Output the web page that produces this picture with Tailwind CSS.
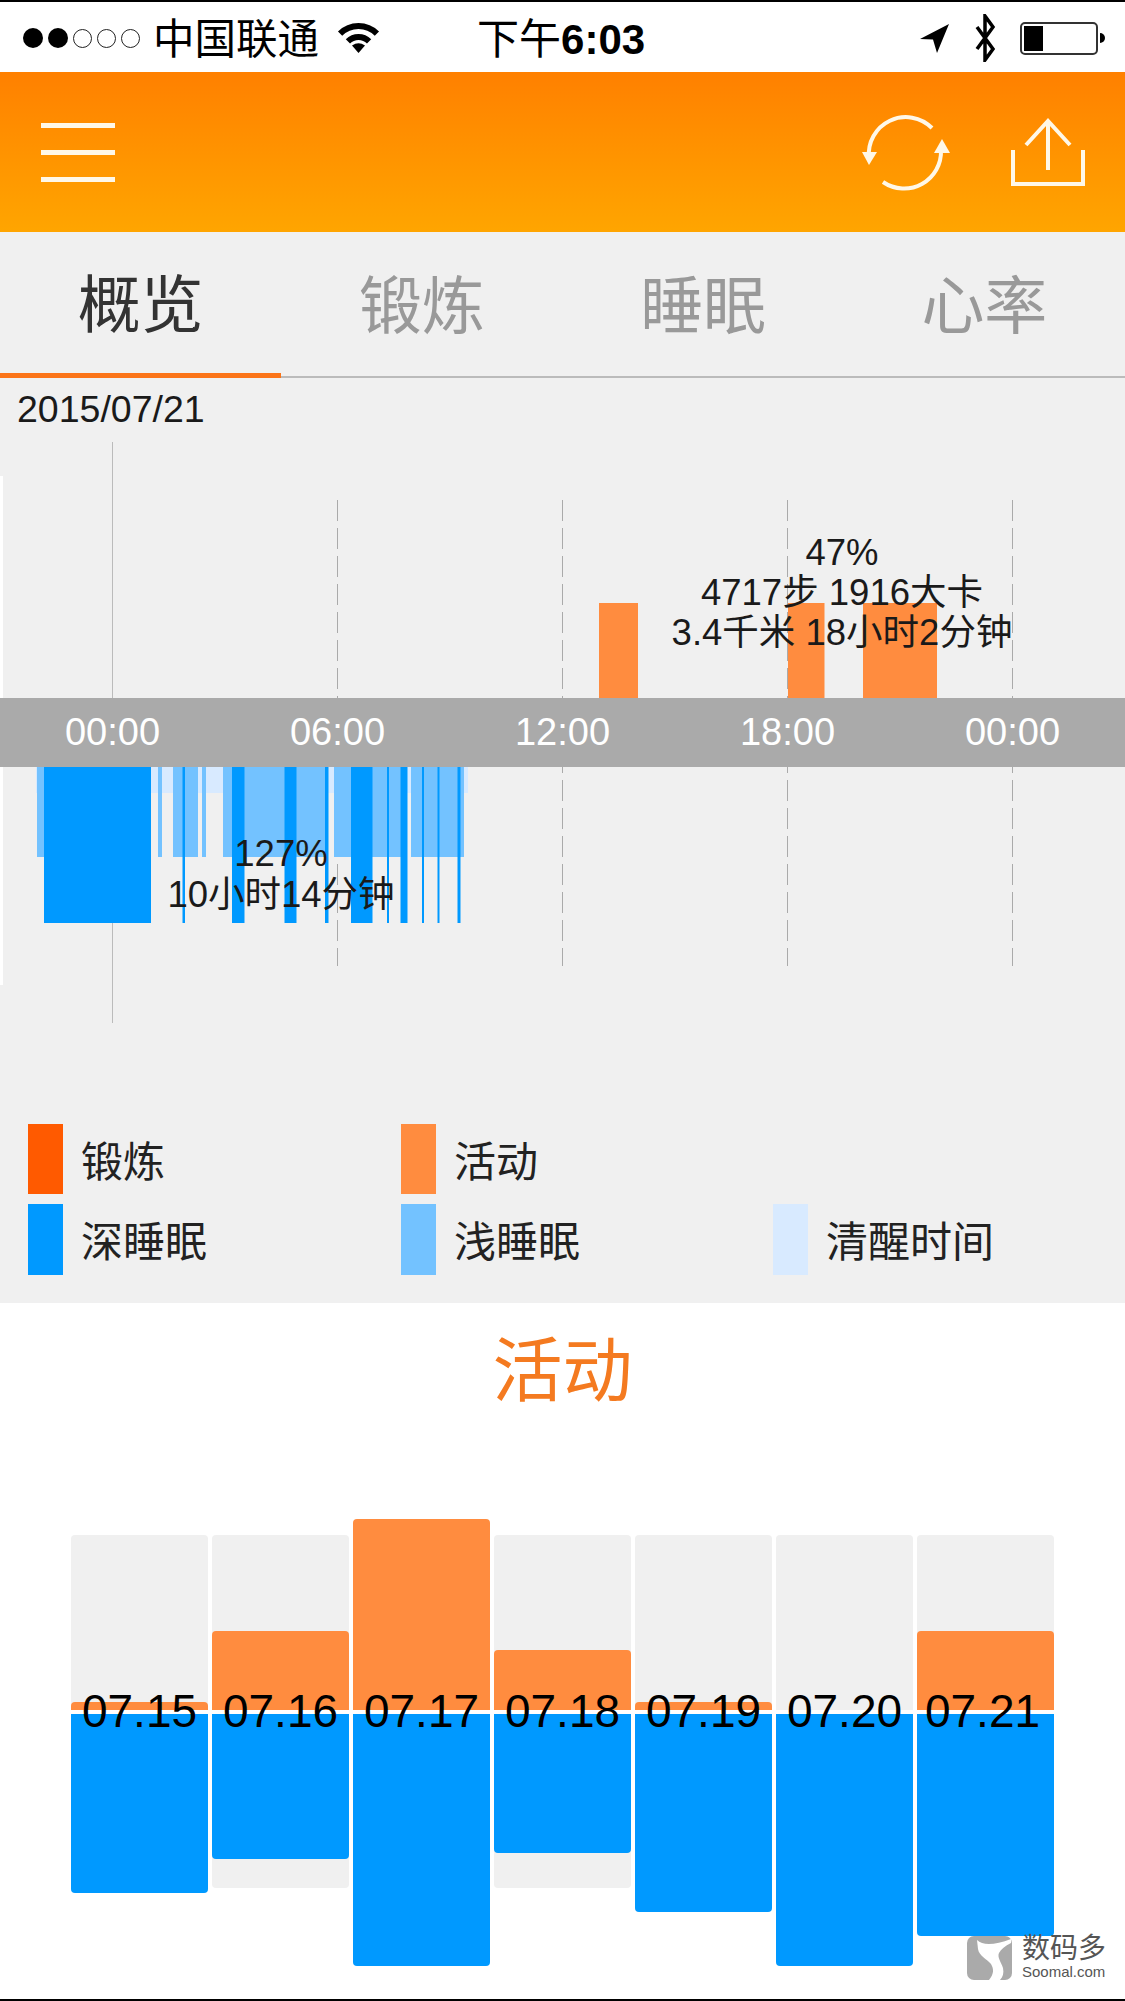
<!DOCTYPE html>
<html lang="zh-CN">
<head>
  <meta charset="UTF-8">
  <title>概览</title>
  <meta name="viewport" content="width=device-width,initial-scale=1">
  <script src="https://cdn.jsdelivr.net/npm/@tailwindcss/browser@4"></script>
</head>
<body class="relative w-[1125px] h-[2001px] overflow-hidden bg-white text-[#1a1a1a] font-['Liberation_Sans','Noto_Sans_CJK_SC',sans-serif]">
  <div class="h-[2px] bg-black"></div>

  <!-- Status bar -->
  <div class="h-[70px] flex items-center pl-[23px] pr-[20px] pt-[2px] text-black">
    <div class="flex items-center gap-[5px]">
      <span class="w-[20px] h-[20px] rounded-full bg-black"></span>
      <span class="w-[20px] h-[20px] rounded-full bg-black"></span>
      <span class="w-[19px] h-[19px] rounded-full border border-[#222]"></span>
      <span class="w-[19px] h-[19px] rounded-full border border-[#222]"></span>
      <span class="w-[19px] h-[19px] rounded-full border border-[#222]"></span>
    </div>
    <span class="ml-[13px] mt-[3px] text-[41.5px] leading-none whitespace-nowrap">中国联通</span>
    <svg class="ml-[18px] -mt-[2px]" width="43" height="32" viewBox="0 0 43 32">
      <path d="M3.1 12.6A26 26 0 0 1 39.9 12.6M10.9 20.4A15 15 0 0 1 32.1 20.4" fill="none" stroke="#000" stroke-width="6"/>
      <path d="M21.5 32L15 24.5Q21.5 20 28 24.5Z" fill="#000"/>
    </svg>
    <span class="ml-[97px] mt-[3px] text-[42px] leading-none whitespace-nowrap">下午<span class="font-bold">6:03</span></span>
    <svg class="ml-auto" width="32" height="31" viewBox="0 0 32 31"><path d="M30 1L1 16L14 16.5L18 30Z" fill="#000"/></svg>
    <svg class="ml-[21px]" width="26" height="48" viewBox="0 0 26 48"><path d="M5 13L21 35L13 46L13 2L21 13L5 35" fill="none" stroke="#000" stroke-width="3.5"/></svg>
    <div class="ml-[22px] flex items-center">
      <div class="w-[78px] h-[33px] rounded-[5px] border-2 border-[#333] p-[2px]">
        <div class="w-[19px] h-full bg-black"></div>
      </div>
      <div class="ml-[2px] w-[5px] h-[10px] rounded-r-full bg-black"></div>
    </div>
  </div>

  <!-- App header -->
  <header class="h-[160px] flex items-center pl-[41px] pr-[38px] bg-linear-to-b from-[#ff8000] to-[#ffa500]">
    <div class="w-[74px] flex flex-col gap-[22px]">
      <span class="h-[5px] bg-[#fff8e8]"></span>
      <span class="h-[5px] bg-[#fff8e8]"></span>
      <span class="h-[5px] bg-[#fff8e8]"></span>
    </div>
    <svg class="ml-auto" width="94" height="80" viewBox="858 112 94 80" fill="none" stroke="#fff8e8" stroke-width="4">
      <path d="M869 158A37 37 0 0 1 932 128"/>
      <path d="M883 182A37 37 0 0 0 941 150"/>
      <path d="M869 165L862 152L877 152Z" fill="#fff8e8" stroke="none"/>
      <path d="M942 139L934 153L950 153Z" fill="#fff8e8" stroke="none"/>
    </svg>
    <svg class="ml-[57px]" width="78" height="72" viewBox="1009 116 78 72" fill="none" stroke="#fff8e8" stroke-width="4">
      <path d="M1013 150V184H1083V150"/>
      <path d="M1048 170V122M1026 145L1048 121L1070 145"/>
    </svg>
  </header>

  <!-- Tabs -->
  <nav class="grid grid-cols-4 h-[146px] bg-[#f0f0f0] text-[63px] text-[#999]">
    <div class="flex items-center justify-center pt-[6px] border-b-[5px] border-[#fb7418] text-[#333]">概览</div>
    <div class="flex items-center justify-center pt-[4px] border-b-2 border-[#bbb]">锻炼</div>
    <div class="flex items-center justify-center pt-[4px] border-b-2 border-[#bbb]">睡眠</div>
    <div class="flex items-center justify-center pt-[4px] border-b-2 border-[#bbb]">心率</div>
  </nav>

  <!-- Daily overview -->
  <section class="bg-[#f0f0f0] h-[925px]">
    <div class="h-[64px] flex items-center pl-[17px] text-[37.5px] leading-none">2015/07/21</div>

    <div class="relative h-[658px]">
      <svg class="block" width="1125" height="658" viewBox="0 442 1125 658">
        <rect x="0" y="476" width="3" height="509" fill="#fff"/>

        <!-- hour grid -->
        <path d="M112.5 442V1023" stroke="#bbb" stroke-width="1"/>
        <path d="M337.5 500V966M562.5 500V966M787.5 500V966M1012.5 500V966" stroke="#aaa" stroke-width="1" stroke-dasharray="21 7"/>

        <!-- activity -->
        <g fill="#ff8c3f">
          <rect x="599" y="603" width="39" height="95"/>
          <rect x="788" y="603" width="36.5" height="95"/>
          <rect x="863" y="603" width="74" height="95"/>
        </g>

        <!-- awake -->
        <rect x="36" y="767" width="432" height="26" fill="#d8eaff"/>

        <!-- light sleep -->
        <g fill="#73c2ff">
          <rect x="37" y="767" width="7" height="90"/>
          <rect x="158" y="767" width="4" height="90"/>
          <rect x="173" y="767" width="25" height="90"/>
          <rect x="202" y="767" width="4" height="90"/>
          <rect x="223" y="767" width="105" height="90"/>
          <rect x="334" y="767" width="73" height="90"/>
          <rect x="411" y="767" width="53" height="90"/>
        </g>

        <!-- deep sleep -->
        <g fill="#0099ff">
          <rect x="44" y="767" width="107" height="156"/>
          <rect x="182.5" y="767" width="2.5" height="156"/>
          <rect x="232" y="767" width="12.5" height="156"/>
          <rect x="284.5" y="767" width="12" height="156"/>
          <rect x="325" y="767" width="3.5" height="156"/>
          <rect x="351" y="767" width="21.5" height="156"/>
          <rect x="387" y="767" width="2" height="156"/>
          <rect x="400.5" y="767" width="7" height="156"/>
          <rect x="422" y="767" width="2" height="156"/>
          <rect x="437.5" y="767" width="2" height="156"/>
          <rect x="457.5" y="767" width="3" height="156"/>
        </g>
      </svg>

      <!-- hour axis band -->
      <div class="absolute left-0 top-[256px] w-full h-[69px] grid grid-cols-5 items-center bg-[#aaaaaa] text-white text-[38px] text-center">
        <span>00:00</span>
        <span>06:00</span>
        <span>12:00</span>
        <span>18:00</span>
        <span>00:00</span>
      </div>

      <div class="absolute left-[642px] top-[91px] w-[400px] text-center text-[36.5px] leading-[40px] whitespace-nowrap">
        <p>47%</p>
        <p>4717步 1916大卡</p>
        <p>3.4千米 18小时2分钟</p>
      </div>
      <div class="absolute left-[131px] top-[391px] w-[300px] text-center text-[36.5px] leading-[41px] whitespace-nowrap">
        <p>127%</p>
        <p>10小时14分钟</p>
      </div>
    </div>

    <!-- Legend -->
    <div class="grid grid-cols-[373px_372px_1fr] gap-y-[10px] pt-[24px] pl-[28px] text-[42px] text-[#222]">
      <div class="flex items-center h-[70px]"><span class="w-[35px] h-full bg-[#ff5a00]"></span><span class="ml-[18px] mt-[6px]">锻炼</span></div>
      <div class="flex items-center h-[70px] col-span-2"><span class="w-[35px] h-full bg-[#ff8c3f]"></span><span class="ml-[18px] mt-[6px]">活动</span></div>
      <div class="flex items-center h-[71px]"><span class="w-[35px] h-full bg-[#0099ff]"></span><span class="ml-[18px] mt-[6px]">深睡眠</span></div>
      <div class="flex items-center h-[71px]"><span class="w-[35px] h-full bg-[#73c2ff]"></span><span class="ml-[18px] mt-[6px]">浅睡眠</span></div>
      <div class="flex items-center h-[71px]"><span class="w-[35px] h-full bg-[#d8eaff]"></span><span class="ml-[18px] mt-[6px]">清醒时间</span></div>
    </div>
  </section>

  <!-- Weekly activity -->
  <section>
    <h2 class="h-[130px] mb-[86px] pt-[8px] flex items-center justify-center text-[70px] font-normal text-[#f47a20]">活动</h2>

    <div class="grid grid-cols-[repeat(7,137px)] gap-x-[4px] pl-[71px]">
      <div class="relative">
        <div class="relative h-[191px]">
          <div class="absolute bottom-0 w-full h-[175px] rounded-t-[4px] bg-[#f0f0f0]"></div>
          <div class="absolute bottom-0 w-full h-[8px] rounded-t-[4px] bg-[#ff8c3f]"></div>
        </div>
        <div class="relative mt-[4px] h-[252px]">
          <div class="absolute top-0 w-full h-[174px] rounded-b-[4px] bg-[#f0f0f0]"></div>
          <div class="absolute top-0 w-full h-[179px] rounded-b-[4px] bg-[#0099ff]"></div>
        </div>
        <span class="absolute inset-x-0 top-[165px] text-center text-[46px] leading-[54px] text-black">07.15</span>
      </div>
      <div class="relative">
        <div class="relative h-[191px]">
          <div class="absolute bottom-0 w-full h-[175px] rounded-t-[4px] bg-[#f0f0f0]"></div>
          <div class="absolute bottom-0 w-full h-[79px] rounded-t-[4px] bg-[#ff8c3f]"></div>
        </div>
        <div class="relative mt-[4px] h-[252px]">
          <div class="absolute top-0 w-full h-[174px] rounded-b-[4px] bg-[#f0f0f0]"></div>
          <div class="absolute top-0 w-full h-[145px] rounded-b-[4px] bg-[#0099ff]"></div>
        </div>
        <span class="absolute inset-x-0 top-[165px] text-center text-[46px] leading-[54px] text-black">07.16</span>
      </div>
      <div class="relative">
        <div class="relative h-[191px]">
          <div class="absolute bottom-0 w-full h-[175px] rounded-t-[4px] bg-[#f0f0f0]"></div>
          <div class="absolute bottom-0 w-full h-[191px] rounded-t-[4px] bg-[#ff8c3f]"></div>
        </div>
        <div class="relative mt-[4px] h-[252px]">
          <div class="absolute top-0 w-full h-[174px] rounded-b-[4px] bg-[#f0f0f0]"></div>
          <div class="absolute top-0 w-full h-[252px] rounded-b-[4px] bg-[#0099ff]"></div>
        </div>
        <span class="absolute inset-x-0 top-[165px] text-center text-[46px] leading-[54px] text-black">07.17</span>
      </div>
      <div class="relative">
        <div class="relative h-[191px]">
          <div class="absolute bottom-0 w-full h-[175px] rounded-t-[4px] bg-[#f0f0f0]"></div>
          <div class="absolute bottom-0 w-full h-[60px] rounded-t-[4px] bg-[#ff8c3f]"></div>
        </div>
        <div class="relative mt-[4px] h-[252px]">
          <div class="absolute top-0 w-full h-[174px] rounded-b-[4px] bg-[#f0f0f0]"></div>
          <div class="absolute top-0 w-full h-[139px] rounded-b-[4px] bg-[#0099ff]"></div>
        </div>
        <span class="absolute inset-x-0 top-[165px] text-center text-[46px] leading-[54px] text-black">07.18</span>
      </div>
      <div class="relative">
        <div class="relative h-[191px]">
          <div class="absolute bottom-0 w-full h-[175px] rounded-t-[4px] bg-[#f0f0f0]"></div>
          <div class="absolute bottom-0 w-full h-[8px] rounded-t-[4px] bg-[#ff8c3f]"></div>
        </div>
        <div class="relative mt-[4px] h-[252px]">
          <div class="absolute top-0 w-full h-[174px] rounded-b-[4px] bg-[#f0f0f0]"></div>
          <div class="absolute top-0 w-full h-[198px] rounded-b-[4px] bg-[#0099ff]"></div>
        </div>
        <span class="absolute inset-x-0 top-[165px] text-center text-[46px] leading-[54px] text-black">07.19</span>
      </div>
      <div class="relative">
        <div class="relative h-[191px]">
          <div class="absolute bottom-0 w-full h-[175px] rounded-t-[4px] bg-[#f0f0f0]"></div>
        </div>
        <div class="relative mt-[4px] h-[252px]">
          <div class="absolute top-0 w-full h-[174px] rounded-b-[4px] bg-[#f0f0f0]"></div>
          <div class="absolute top-0 w-full h-[252px] rounded-b-[4px] bg-[#0099ff]"></div>
        </div>
        <span class="absolute inset-x-0 top-[165px] text-center text-[46px] leading-[54px] text-black">07.20</span>
      </div>
      <div class="relative">
        <div class="relative h-[191px]">
          <div class="absolute bottom-0 w-full h-[175px] rounded-t-[4px] bg-[#f0f0f0]"></div>
          <div class="absolute bottom-0 w-full h-[79px] rounded-t-[4px] bg-[#ff8c3f]"></div>
        </div>
        <div class="relative mt-[4px] h-[252px]">
          <div class="absolute top-0 w-full h-[174px] rounded-b-[4px] bg-[#f0f0f0]"></div>
          <div class="absolute top-0 w-full h-[222px] rounded-b-[4px] bg-[#0099ff]"></div>
        </div>
        <span class="absolute inset-x-0 top-[165px] -translate-x-[3px] text-center text-[46px] leading-[54px] text-black">07.21</span>
      </div>
    </div>
  </section>

  <!-- Site mark -->
  <div class="absolute left-[967px] top-[1935px] flex items-center gap-[10px]">
    <svg width="45" height="44" viewBox="0 0 45 44">
      <rect width="45" height="44" rx="7" fill="#aaa"/>
      <path d="M10 4C16 10 28 9 44 3L44 7C38 10 34 13 32 17C30 21 34 26 36 32C37 37 36 41 33 44L22 44C27 38 27 33 24 28C20 23 12 20 11 13Z" fill="#fff"/>
    </svg>
    <div class="flex flex-col text-[#555]">
      <span class="text-[28px] leading-[28px] whitespace-nowrap">数码多</span>
      <span class="text-[15px] leading-[18px]">Soomal.com</span>
    </div>
  </div>

  <div class="absolute left-0 bottom-0 w-full h-[2px] bg-black"></div>
</body>
</html>
